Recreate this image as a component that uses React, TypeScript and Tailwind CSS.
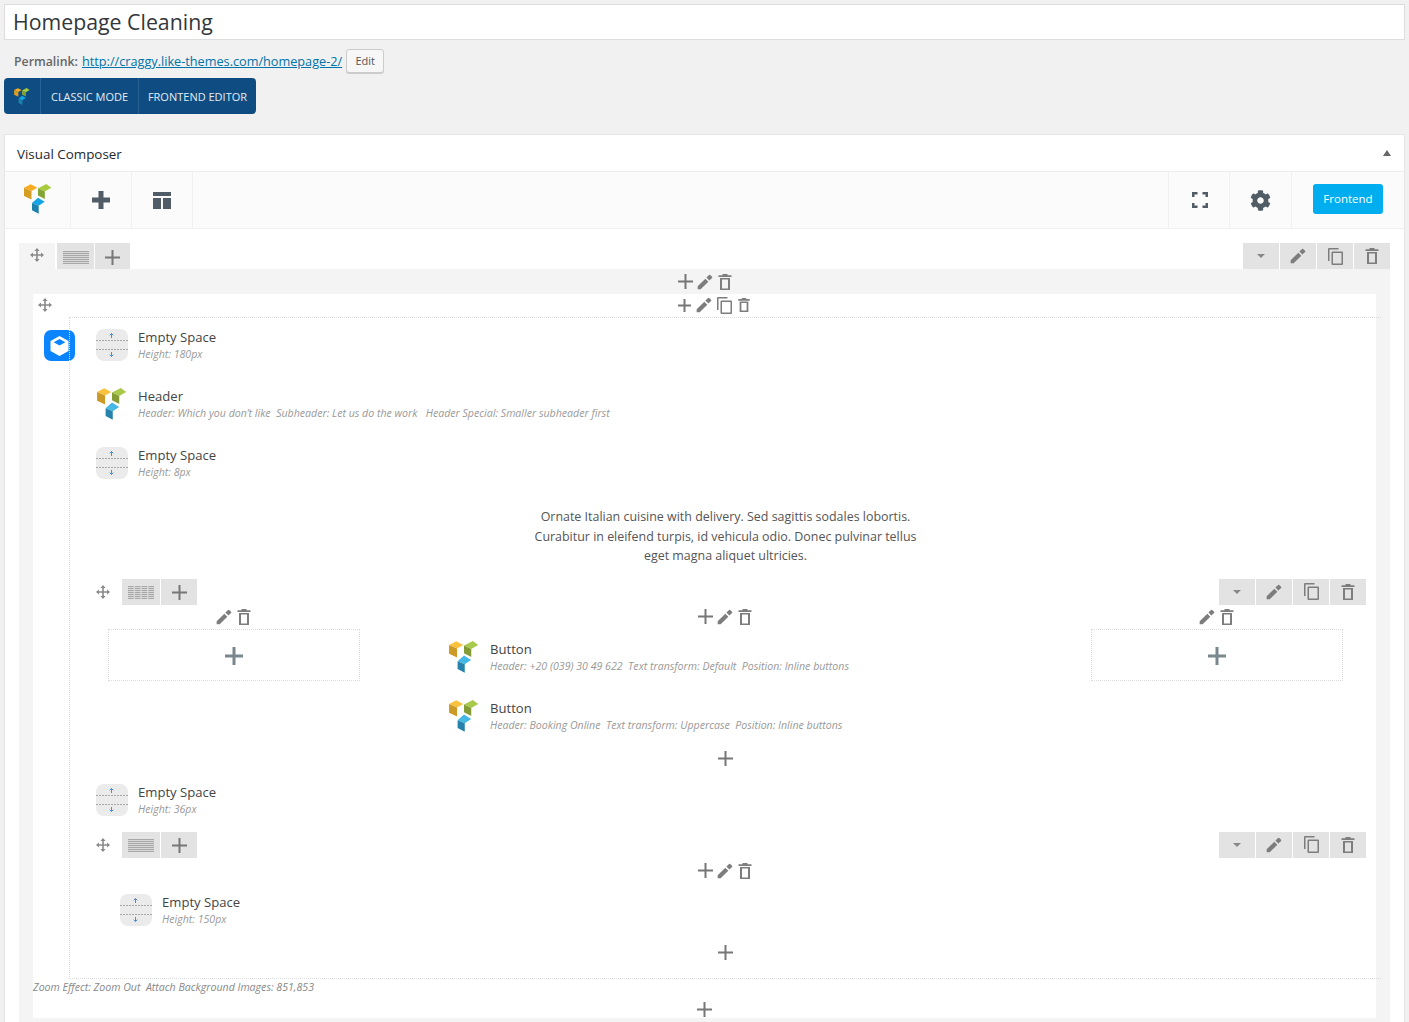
import React from "react";
import { FaCog } from "react-icons/fa";

const Logo = ({ className, vivid }: { className: string; vivid?: boolean }) => (
  <svg viewBox="0 0 28 30" className={className}>
    <polygon points="0,3.7 6.7,0.300 13.3,3.700 7.500,7" fill={vivid ? "#f9ab1f" : "#fbc23d"} />
    <polygon points="0,3.7 7.500,7 7.500,15.500 0,12" fill={vivid ? "#d49d24" : "#cc9b27"} />
    <polygon points="14,4.300 22.300,0 27.300,3.700 20.800,7.500" fill={vivid ? "#a8cc3e" : "#a9c94a"} />
    <polygon points="14,4.300 20.800,7.500 20.800,15 14,11.500" fill={vivid ? "#83a533" : "#839c34"} />
    <polygon points="8,19 14,13.700 20.700,17.700 14.700,21.700" fill={vivid ? "#12a5e6" : "#45b8e6"} />
    <polygon points="8,19 14.700,21.700 14.700,29.800 8,26.300" fill={vivid ? "#1b80ab" : "#2583ab"} />
  </svg>
);

const Plus = ({ size = 14, weight = 2, color = "#777" }: { size?: number; weight?: number; color?: string }) => (
  <svg width={size} height={size} viewBox={`0 0 ${size} ${size}`} className="shrink-0">
    <rect x={0} y={(size - weight) / 2} width={size} height={weight} fill={color} />
    <rect x={(size - weight) / 2} y={0} width={weight} height={size} fill={color} />
  </svg>
);

const Pencil = ({ size = 16 }: { size?: number }) => (
  <svg width={size} height={size} viewBox="0 0 24 24" className="shrink-0">
    <path fill="#7d7d7d" d="M1 18.500V23h4.500L17 11.500 12.500 7 1 18.500zM22.600 5.900a1.200 1.200 0 0 0 0-1.700l-2.800-2.800a1.200 1.200 0 0 0-1.700 0l-4 4 4.500 4.500 4-4z" />
  </svg>
);

const Trash = ({ size = 16 }: { size?: number }) => (
  <svg width={size} height={size} viewBox="0 0 16 16" className="shrink-0">
    <path fill="#7d7d7d" d="M5.500 0h5v1.200h4V3H1.500V1.200h4V0zM3 4h10v12H3V4zm2 1.600v8.800h6V5.600H5z" />
  </svg>
);

const Copy = () => (
  <svg width={15} height={17} viewBox="0 0 15 17" className="shrink-0">
    <path fill="#7d7d7d" d="M0 1a1 1 0 0 1 1-1h9.500v1.500h-9V13H0V1zm3.500 3.500a1 1 0 0 1 1-1H14a1 1 0 0 1 1 1V16a1 1 0 0 1-1 1H4.500a1 1 0 0 1-1-1V4.500zM5 5v10.500h8.500V5H5z" />
  </svg>
);

const Move = () => (
  <svg width={14} height={14} viewBox="0 0 14 14" className="shrink-0">
    <path fill="#8a8a8a" d="M7 0l2.600 3H7.800v3.200H11V4.400L14 7l-3 2.600V7.800H7.800V11h1.800L7 14l-2.600-3h1.800V7.800H3v1.800L0 7l3-2.600v1.800h3.200V3H4.400L7 0z" />
  </svg>
);

const Stripes = ({ columns }: { columns: number }) => {
  const w = 26;
  const gap = 1;
  const cw = (w - gap * (columns - 1)) / columns;
  return (
    <svg width={w} height={13} viewBox="0 0 26 13">
      {Array.from({ length: columns }).map((_, c) =>
        [0, 2, 4, 6, 8, 10, 12].map((y) => (
          <rect key={`${c}-${y}`} x={c * (cw + gap)} y={y} width={cw} height={1.2} fill="#a8a8a8" />
        ))
      )}
    </svg>
  );
};

const Tab = ({ children, w = "w-[36px]", drop }: { children: React.ReactNode; w?: string; drop?: boolean }) => (
  <div className={`${w} h-[26px] bg-[#e3e3e3] flex items-center justify-center ${drop ? "pt-[2px]" : ""}`}>{children}</div>
);

const RightTabs = () => (
  <div className="flex gap-px">
    <Tab>
      <div className="w-0 h-0 border-l-[4px] border-r-[4px] border-t-[4px] border-l-transparent border-r-transparent border-t-[#888]" />
    </Tab>
    <Tab><Pencil /></Tab>
    <Tab><Copy /></Tab>
    <Tab><Trash /></Tab>
  </div>
);

const InnerToolbar = ({ columns }: { columns: number }) => (
  <div className="flex justify-between h-[26px]">
    <div className="flex items-center">
      <div className="w-[36px] mr-px flex justify-center"><Move /></div>
      <div className="flex gap-px">
        <Tab w="w-[38px]" drop><Stripes columns={columns} /></Tab>
        <Tab w="w-[36px]" drop><Plus size={15} /></Tab>
      </div>
    </div>
    <RightTabs />
  </div>
);

const EmptyIcon = () => (
  <svg width={32} height={32} viewBox="0 0 32 32" className="shrink-0">
    <rect width={32} height={32} rx={8} fill="#ebebeb" />
    <path d="M0 11.500h32M0 20.500h32" stroke="#a8a8a8" strokeWidth={1} strokeDasharray="2 1" />
    <path d="M15.500 9V4.500M13.700 6.300l1.800-1.800 1.800 1.800" stroke="#4a8fd0" strokeWidth={1} fill="none" />
    <path d="M15.500 23v4.500M13.700 25.700l1.800 1.800 1.800-1.800" stroke="#4a8fd0" strokeWidth={1} fill="none" />
  </svg>
);

const Element = ({ icon, title, sub, className = "" }: { icon: React.ReactNode; title: string; sub: string; className?: string }) => (
  <div className={`flex items-start h-[32px] ${className}`}>
    <div className="w-[32px] h-[32px] shrink-0 flex">{icon}</div>
    <div className="ml-[10px]">
      <div className="text-[13.1px] leading-[16px] mb-[2px] text-[#444]">{title}</div>
      <div className="text-[10.6px] leading-[15px] italic text-[#999] whitespace-pre">{sub}</div>
    </div>
  </div>
);

const AddBox = () => (
  <div className="mx-[12px] h-[52px] border border-dotted border-[#ddd] flex items-center justify-center pt-[2px]">
    <Plus size={18} weight={3} color="#7a878d" />
  </div>
);

const Ops = ({ plus, className = "" }: { plus?: boolean; className?: string }) => (
  <div className={`h-[16px] flex items-center justify-center gap-[4px] ${className}`}>
    {plus && <Plus size={15} />}
    <Pencil />
    <Trash />
  </div>
);

const VcLogo = () => <Logo className="w-[30px] h-[32px] ml-px" />;

export default function App() {
  return (
    <div className="w-[1409px] h-[1022px] overflow-hidden bg-[#f1f1f1] font-['Open_Sans',sans-serif] pt-[4px] px-[4px]">
      <div className="h-[36px] bg-white border border-[#ddd] flex items-center pl-[8px] text-[21.3px] text-[#32373c] w-[1401px]">
        Homepage Cleaning
      </div>

      <div className="mt-[9px] h-[24px] flex items-center pl-[10px] text-[12.7px]">
        <span className="pt-[2px] w-[68px] text-[12.3px] font-semibold text-[#666]">Permalink:</span>
        <span className="pt-[2px] text-[#0073aa] underline">http://craggy.like-themes.com/homepage-2/</span>
        <span className="ml-[4px] h-[24px] w-[38px] flex items-center justify-center text-[11px] text-[#555] bg-[#f7f7f7] border border-[#ccc] rounded-[3px] shadow-[0_1px_0_#ccc]">
          Edit
        </span>
      </div>

      <div className="mt-[5px] w-[252px] h-[36px] bg-[#0f4c81] rounded-[4px] flex items-center text-[11px] text-[#e4edf5]">
        <div className="w-[37px] h-full border-r border-[#2a6193] flex items-center justify-center">
          <Logo className="w-[16px] h-[17px]" vivid />
        </div>
        <div className="w-[98px] h-full border-r border-[#2a6193] flex items-center justify-center pt-[2px]">CLASSIC MODE</div>
        <div className="flex-1 h-full flex items-center justify-center pt-[2px]">FRONTEND EDITOR</div>
      </div>

      <div className="mt-[20px] w-[1401px] h-[900px] bg-white border border-[#e5e5e5]">
        <div className="h-[37px] flex items-center justify-between pl-[12px] pr-[13px] border-b border-[#eee]">
          <span className="pt-[3px] text-[13.4px] font-medium text-[#23282d]">Visual Composer</span>
          <div className="w-0 h-0 border-l-[4.5px] border-r-[4.5px] border-b-[6px] border-l-transparent border-r-transparent border-b-[#666]" />
        </div>

        <div className="h-[57px] bg-[#fbfbfb] border-b border-[#f0f0f0] flex justify-between">
          <div className="flex">
            <div className="w-[66px] border-r border-[#f1f1f1] flex items-center pl-[19px] pb-[3px]">
              <Logo className="w-[28px] h-[30px]" vivid />
            </div>
            <div className="w-[61px] border-r border-[#f1f1f1] flex items-center justify-center">
              <Plus size={18} weight={5} color="#515d66" />
            </div>
            <div className="w-[61px] border-r border-[#f1f1f1] flex items-center justify-center">
              <svg width={18} height={17} viewBox="0 0 18 17">
                <path fill="#515d66" d="M0 0h18v4H0zM0 6h8v11H0zM10 6h8v11h-8z" />
              </svg>
            </div>
          </div>
          <div className="flex">
            <div className="w-[61px] border-l border-[#f1f1f1] flex items-center justify-center pl-[2px]">
              <svg width={16} height={16} viewBox="0 0 16 16">
                <path fill="#515d66" d="M0 0h5.500v2.500H2.500V5H0zM10.500 0H16v5h-2.500V2.500h-3zM0 11h2.500v2.500h3V16H0zM13.500 11H16v5h-5.500v-2.500h3z" />
              </svg>
            </div>
            <div className="w-[62px] border-l border-[#f1f1f1] flex items-center justify-center">
              <FaCog size={21} color="#515d66" />
            </div>
            <div className="w-[113px] border-l border-[#f1f1f1] flex items-center pl-[21px] pb-[2px]">
              <div className="w-[70px] h-[30px] bg-[#00aeef] rounded-[3px] text-white text-[11.5px] flex items-center justify-center">Frontend</div>
            </div>
          </div>
        </div>

        <div className="px-[14px] pt-[14px]">
          <div className="flex justify-between h-[26px]">
            <div className="flex gap-[2px]">
              <div className="w-[36px] h-[26px] bg-[#f4f4f4] flex justify-center pt-[5px]"><Move /></div>
              <div className="flex gap-px">
                <Tab w="w-[37px]" drop><Stripes columns={1} /></Tab>
                <Tab w="w-[35px]" drop><Plus size={15} /></Tab>
              </div>
            </div>
            <RightTabs />
          </div>

          <div className="h-[760px] bg-[#f4f4f4] px-[14px]">
            <div className="h-[25px] flex items-center justify-center gap-[4px] pl-[2px]">
              <Plus size={15} />
              <Pencil />
              <Trash />
            </div>

            <div className="w-[1343px] h-[724px] bg-white">
              <div className="h-[23px] flex items-center pb-[1px]">
                <div className="w-[24px] flex justify-center"><Move /></div>
                <div className="flex-1 flex justify-center items-center">
                  <div className="flex items-center gap-[5px] ml-[-4px]">
                    <Plus size={13} />
                    <Pencil />
                    <Copy />
                    <Trash size={14} />
                  </div>
                </div>
              </div>

              <div className="flex">
                <div className="w-[36px] shrink-0 pt-[13px] pl-[11px]">
                  <svg width={31} height={31} viewBox="0 0 31 31">
                    <rect width={31} height={31} rx={7} fill="#0a84ff" />
                    <path fill="#fff" d="M15.500 6l9 5v10l-9 5-9-5V11z" />
                    <path fill="#0a84ff" d="M15.500 9l5.800 3.200-5.800 3.200-5.800-3.200z" />
                  </svg>
                </div>

                <div className="w-[1312px] shrink-0 h-[662px] border-t border-l border-b border-dotted border-[#ddd] pt-[11px] pl-[26px]">
                  <Element icon={<EmptyIcon />} title="Empty Space" sub="Height: 180px" />
                  <Element
                    className="mt-[27px]"
                    icon={<VcLogo />}
                    title="Header"
                    sub="Header: Which you don’t like  Subheader: Let us do the work   Header Special: Smaller subheader first"
                  />
                  <Element className="mt-[27px]" icon={<EmptyIcon />} title="Empty Space" sub="Height: 8px" />

                  <div className="mt-[28px] -ml-[26px] text-center text-[12.45px] leading-[19.5px] text-[#555]">
                    Ornate Italian cuisine with delivery. Sed sagittis sodales lobortis.
                    <br />
                    Curabitur in eleifend turpis, id vehicula odio. Donec pulvinar tellus
                    <br />
                    eget magna aliquet ultricies.
                  </div>

                  <div className="mt-[13px] ml-[-11px] w-[1281px]">
                    <InnerToolbar columns={4} />
                    <div className="ml-[11px] w-[1259px] grid grid-cols-[276px_707px_276px] h-[179px]">
                      <div className="pt-[4px]">
                        <Ops className="mb-[4px]" />
                        <AddBox />
                      </div>
                      <div className="pt-[4px]">
                        <Ops plus />
                        <div className="pl-[76px] mt-[16px]">
                          <Element icon={<VcLogo />} title="Button" sub="Header: +20 (039) 30 49 622  Text transform: Default  Position: Inline buttons" />
                          <Element className="mt-[27px]" icon={<VcLogo />} title="Button" sub="Header: Booking Online  Text transform: Uppercase  Position: Inline buttons" />
                        </div>
                        <div className="flex justify-center mt-[19px]"><Plus size={15} /></div>
                      </div>
                      <div className="pt-[4px]">
                        <Ops className="mb-[4px]" />
                        <AddBox />
                      </div>
                    </div>
                  </div>

                  <Element icon={<EmptyIcon />} title="Empty Space" sub="Height: 36px" />

                  <div className="mt-[16px] ml-[-11px] w-[1281px]">
                    <InnerToolbar columns={1} />
                    <Ops plus className="mt-[5px]" />
                    <div className="mt-[15px] ml-[35px]">
                      <Element icon={<EmptyIcon />} title="Empty Space" sub="Height: 150px" />
                    </div>
                    <div className="flex justify-center mt-[19px]"><Plus size={15} /></div>
                  </div>
                </div>
              </div>

              <div className="text-[10.6px] italic text-[#888] leading-[15px] mt-[1px] whitespace-pre">
                Zoom Effect: Zoom Out  Attach Background Images: 851,853
              </div>
              <div className="flex justify-center mt-[7px]"><Plus size={15} /></div>
            </div>
          </div>
        </div>
      </div>
    </div>
  );
}
